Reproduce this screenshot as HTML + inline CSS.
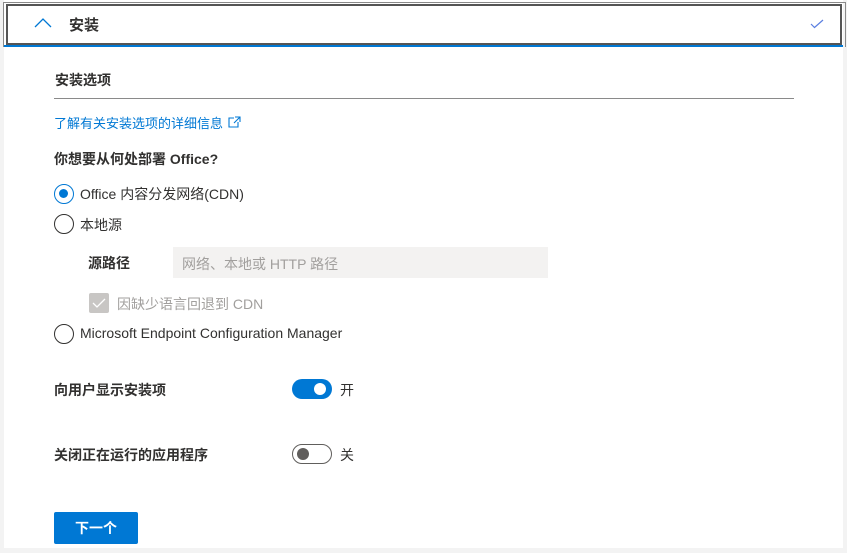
<!DOCTYPE html>
<html><head><meta charset="utf-8"><style>
*{box-sizing:border-box;margin:0;padding:0}
body{width:847px;height:553px;background:#f3f3f3;font-family:"Liberation Sans","Noto Sans CJK SC",sans-serif;color:#323130;position:relative;overflow:hidden}
.panel{position:absolute;left:4px;top:0;width:839px;height:548px;background:#fff}
.outer{position:absolute;left:3px;top:2px;width:843px;height:45px;border:1px solid #8a8a8a;border-bottom:none}
.head{position:absolute;left:6px;top:4px;width:836px;height:41px;border:2px solid #555;background:#fff}
.blue{position:absolute;left:4px;top:45px;width:839px;height:2px;background:#0078d4}
.t{position:absolute;white-space:nowrap;font-size:14px}
.b{font-weight:bold}
.radio{position:absolute;width:20px;height:20px;border:1.5px solid #323130;border-radius:50%;background:#fff}
.radio.on{border-color:#0078d4}
.radio.on::after{content:"";position:absolute;left:4px;top:4px;width:9px;height:9px;border-radius:50%;background:#0078d4}
</style></head><body>
<div class="panel"></div>
<div class="outer"></div>
<div class="head"></div>
<div class="blue"></div>
<svg style="position:absolute;left:34px;top:18px" width="18" height="10"><path d="M1 9 L9 1 L17 9" fill="none" stroke="#0078d4" stroke-width="1.3"/></svg>
<div class="t b" style="left:69px;top:14px;font-size:15px">安装</div>
<svg style="position:absolute;left:810px;top:19px" width="14" height="10"><path d="M1 5 L4.5 8.5 L13 1" fill="none" stroke="#5b7fe0" stroke-width="1.2"/></svg>
<div class="t b" style="left:55px;top:70px">安装选项</div>
<div style="position:absolute;left:54px;top:98px;width:740px;height:1px;background:#8a8a8a"></div>
<div class="t" style="left:54px;top:113px;color:#0078d4;font-size:13px">了解有关安装选项的详细信息</div>
<svg style="position:absolute;left:228px;top:116px" width="13" height="12"><path d="M6 2 H1 V11 H10 V6 M7 1 H12 V6 M12 1 L6 7" fill="none" stroke="#0078d4" stroke-width="1.1"/></svg>
<div class="t b" style="left:54px;top:149px">你想要从何处部署 Office?</div>
<div class="radio on" style="left:54px;top:184px"></div>
<div class="t" style="left:80px;top:184px">Office 内容分发网络(CDN)</div>
<div class="radio" style="left:54px;top:214px"></div>
<div class="t" style="left:80px;top:215px">本地源</div>
<div class="t b" style="left:88px;top:253px">源路径</div>
<div style="position:absolute;left:173px;top:247px;width:375px;height:31px;background:#f3f2f1"></div>
<div class="t" style="left:182px;top:254px;color:#a19f9d">网络、本地或 HTTP 路径</div>
<div style="position:absolute;left:89px;top:293px;width:20px;height:20px;background:#c8c6c4;border-radius:2px"></div>
<svg style="position:absolute;left:92px;top:297px" width="14" height="12"><path d="M1 6 L5 10 L13 2" fill="none" stroke="#fff" stroke-width="1.3"/></svg>
<div class="t" style="left:117px;top:294px;color:#a19f9d">因缺少语言回退到 CDN</div>
<div class="radio" style="left:54px;top:324px"></div>
<div class="t" style="left:80px;top:325px">Microsoft Endpoint Configuration Manager</div>
<div class="t b" style="left:54px;top:380px">向用户显示安装项</div>
<div style="position:absolute;left:292px;top:379px;width:40px;height:20px;border-radius:10px;background:#0078d4"></div>
<div style="position:absolute;left:314px;top:383px;width:12px;height:12px;border-radius:50%;background:#fff"></div>
<div class="t" style="left:340px;top:380px">开</div>
<div class="t b" style="left:54px;top:445px">关闭正在运行的应用程序</div>
<div style="position:absolute;left:292px;top:444px;width:40px;height:20px;border-radius:10px;border:1px solid #605e5c;background:#fff"></div>
<div style="position:absolute;left:297px;top:448px;width:12px;height:12px;border-radius:50%;background:#605e5c"></div>
<div class="t" style="left:340px;top:445px">关</div>
<div style="position:absolute;left:54px;top:512px;width:84px;height:32px;background:#0078d4;border-radius:2px"></div>
<div class="t b" style="left:75px;top:518px;color:#fff">下一个</div>
</body></html>
